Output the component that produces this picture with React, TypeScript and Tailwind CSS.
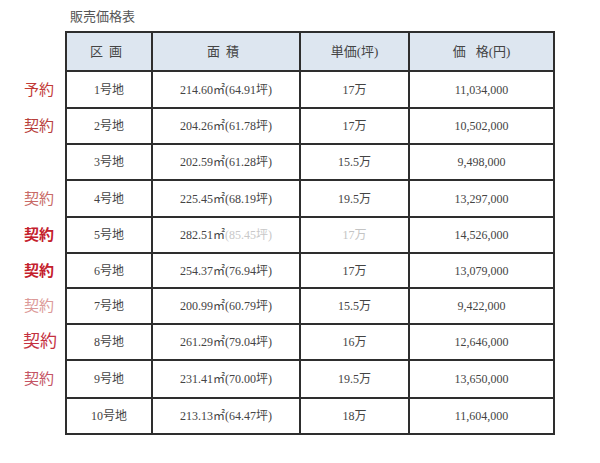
const font = { fontFamily: '"Liberation Serif", "Noto Sans CJK JP", serif' };

type Row = {
  mark?: string;
  markClass?: string;
  lot: string;
  area: string;
  areaFaded?: string;
  unit: string;
  unitFaded?: boolean;
  price: string;
  h: string;
};

const rows: Row[] = [
  { mark: "予約", markClass: "text-[#c23a36] text-[15px]", lot: "1号地", area: "214.60㎡(64.91坪)", unit: "17万", price: "11,034,000", h: "h-[37px]" },
  { mark: "契約", markClass: "text-[#b8403c] text-[15px]", lot: "2号地", area: "204.26㎡(61.78坪)", unit: "17万", price: "10,502,000", h: "h-[36px]" },
  { lot: "3号地", area: "202.59㎡(61.28坪)", unit: "15.5万", price: "9,498,000", h: "h-[36px]" },
  { mark: "契約", markClass: "text-[#c86a66] text-[15px]", lot: "4号地", area: "225.45㎡(68.19坪)", unit: "19.5万", price: "13,297,000", h: "h-[37px]" },
  { mark: "契約", markClass: "text-[#c4202c] text-[15px] font-bold", lot: "5号地", area: "282.51㎡", areaFaded: "(85.45坪)", unit: "17万", unitFaded: true, price: "14,526,000", h: "h-[36px]" },
  { mark: "契約", markClass: "text-[#c4202c] text-[15px] font-bold", lot: "6号地", area: "254.37㎡(76.94坪)", unit: "17万", price: "13,079,000", h: "h-[35px]" },
  { mark: "契約", markClass: "text-[#dc9a98] text-[15px]", lot: "7号地", area: "200.99㎡(60.79坪)", unit: "15.5万", price: "9,422,000", h: "h-[36px]" },
  { mark: "契約", markClass: "text-[#c43040] text-[17px] mr-[-3px]", lot: "8号地", area: "261.29㎡(79.04坪)", unit: "16万", price: "12,646,000", h: "h-[36px]" },
  { mark: "契約", markClass: "text-[#c45464] text-[15px]", lot: "9号地", area: "231.41㎡(70.00坪)", unit: "19.5万", price: "13,650,000", h: "h-[38px]" },
  { lot: "10号地", area: "213.13㎡(64.47坪)", unit: "18万", price: "11,604,000", h: "h-[36px]" },
];

const cell = "border-2 border-[#2e2e2e] text-center align-middle text-[12px] text-[#444]";

export default function App() {
  return (
    <div className="w-[600px] h-[463px] bg-white" style={font}>
      <div className="pl-[70px] pt-[9px] h-[31px] text-[13px] text-[#555] leading-[16px]">販売価格表</div>
      <table className="border-collapse">
        <thead>
          <tr className="h-[39px]">
            <th className="w-[66px] p-0"></th>
            <th className={`${cell} w-[86px] bg-[#dde6f0] font-normal text-[13px] tracking-[6px]`}>区画</th>
            <th className={`${cell} w-[148px] bg-[#dde6f0] font-normal text-[13px] tracking-[6px]`}>面積</th>
            <th className={`${cell} w-[109px] bg-[#dde6f0] font-normal text-[13px]`}>単価(坪)</th>
            <th className={`${cell} w-[145px] bg-[#dde6f0] font-normal text-[13px]`}>
              価<span className="inline-block w-[10px]"></span>格(円)
            </th>
          </tr>
        </thead>
        <tbody>
          {rows.map((r) => (
            <tr key={r.lot} className={r.h}>
              <td className="p-0 pr-[11px] text-right align-middle">
                {r.mark && <span className={r.markClass}>{r.mark}</span>}
              </td>
              <td className={cell}>{r.lot}</td>
              <td className={cell}>
                {r.area}
                {r.areaFaded && <span className="text-[#c8c8c8]">{r.areaFaded}</span>}
              </td>
              <td className={`${cell} ${r.unitFaded ? "text-[#c4c4c4]" : ""}`}>{r.unit}</td>
              <td className={cell}>{r.price}</td>
            </tr>
          ))}
        </tbody>
      </table>
    </div>
  );
}
